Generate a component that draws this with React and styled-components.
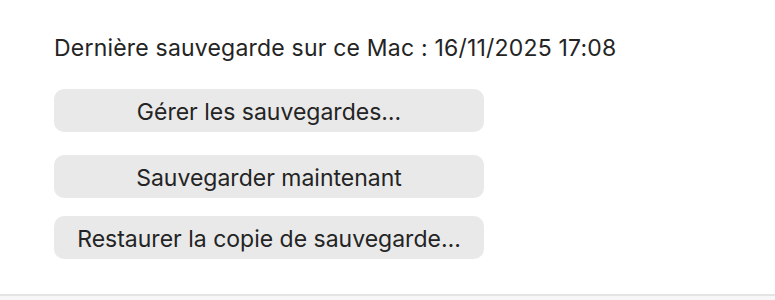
import React from "react";
import styled, { createGlobalStyle } from "styled-components";

const Global = createGlobalStyle`
  html, body { margin: 0; padding: 0; background: #ffffff; }
  body { font-family: Inter, "Noto Sans", sans-serif; -webkit-font-smoothing: antialiased; }
`;

const Page = styled.div`
  width: 775px;
  height: 300px;
  box-sizing: border-box;
  display: flex;
  flex-direction: column;
  background: #fff;
`;

const Content = styled.div`
  flex: 1;
  display: flex;
  flex-direction: column;
  align-items: flex-start;
  padding: 34px 0 0 54px;
`;

const Status = styled.div`
  font-size: 23px;
  color: #242424;
  line-height: 28px;
  margin-bottom: 27px;
  letter-spacing: 0.2px;
`;

const Buttons = styled.div`
  display: flex;
  flex-direction: column;
`;

const Button = styled.button`
  width: 430px;
  height: 43px;
  margin-top: ${(p) => p.$offset || 0}px;
  border: none;
  border-radius: 10px;
  background: #e9e9e9;
  color: #242424;
  font-family: inherit;
  font-size: 23px;
  letter-spacing: 0;
  padding: 2px 0 0;
  display: flex;
  align-items: center;
  justify-content: center;
`;

const Footer = styled.div`
  height: 4px;
  border-top: 2px solid #e4e4e4;
  background: #f7f7f7;
`;

export default function App() {
  return (
    <Page>
      <Global />
      <Content>
        <Status>Dernière sauvegarde sur ce Mac&nbsp;: 16/11/2025 17:08</Status>
        <Buttons>
          <Button>Gérer les sauvegardes…</Button>
          <Button $offset={23}>Sauvegarder maintenant</Button>
          <Button $offset={18}>Restaurer la copie de sauvegarde…</Button>
        </Buttons>
      </Content>
      <Footer />
    </Page>
  );
}
